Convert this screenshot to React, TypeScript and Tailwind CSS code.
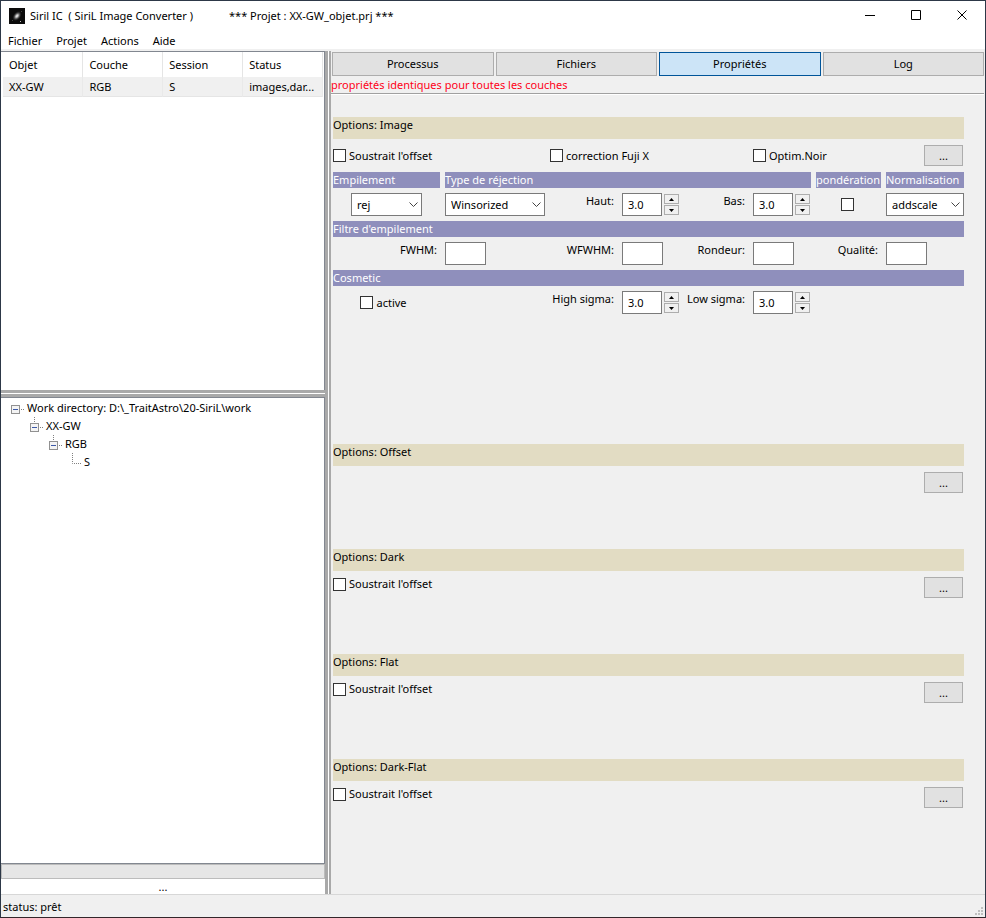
import { useId, useState, type ReactNode } from "react";

const MENUS = ["Fichier", "Projet", "Actions", "Aide"];
const TABS = ["Processus", "Fichiers", "Propriétés", "Log"];
const COLUMNS = ["Objet", "Couche", "Session", "Status"];
const ROWS = [["XX-GW", "RGB", "S", "images,dar..."]];

const GRID =
  "grid gap-[5px] grid-cols-[minmax(0,107fr)_minmax(0,100fr)_minmax(0,67fr)_minmax(0,58fr)_minmax(0,63fr)_minmax(0,58fr)_minmax(0,65fr)_minmax(0,78fr)]";

export default function App() {
  const [tab, setTab] = useState("Propriétés");

  return (
    <div className="flex min-h-screen flex-col border border-[#2d3847] border-b-[#33262a] bg-[#f0f0f0] font-['Noto_Sans','Open_Sans',sans-serif] text-[11px] leading-4 text-black">
      <TitleBar />
      <nav className="flex h-[18px] items-center bg-white pt-0.5">
        {MENUS.map((m) => (
          <button key={m} type="button" className="px-[7px]">
            {m}
          </button>
        ))}
      </nav>

      <div className="flex flex-1">
        <aside className="grid w-[324px] shrink-0 grid-rows-[339fr_7px_467fr_15px_15px] pt-0.5">
          <ObjectList />
          {/* Horizontal sash */}
          <div className="border-b-[3px] border-t-[3px] border-[#a9a9a9] bg-white" />
          <WorkTree />
          <div className="border border-[#bcbcbc] bg-[#e6e6e6]" />
          <p className="bg-white text-center">...</p>
        </aside>

        {/* Vertical sash */}
        <div className="mt-0.5 w-1.5 shrink-0 border-l-[3px] border-r-2 border-[#a9a9a9] bg-white" />

        <main className="min-w-0 flex-1">
          <div role="tablist" className="flex gap-0.5 px-px pt-[3px]">
            {TABS.map((t) => (
              <button
                key={t}
                type="button"
                role="tab"
                aria-selected={t === tab}
                onClick={() => setTab(t)}
                className={`h-6 flex-1 border ${
                  t === tab
                    ? "border-[#005499] bg-[#cce4f7]"
                    : "border-[#adadad] bg-[#e1e1e1]"
                }`}
              >
                {t}
              </button>
            ))}
          </div>
          <p className="h-[17px] pt-px text-[#ff0018]">
            propriétés identiques pour toutes les couches
          </p>
          <div className="mr-px h-0.5 border-b border-t border-b-white border-t-[#a0a0a0]" />

          <div className="pl-0.5 pr-[21px] pt-[22px]">
            <ImageSection />
            <OptionSection title="Options: Offset" />
            <OptionSection title="Options: Dark" offset />
            <OptionSection title="Options: Flat" offset />
            <OptionSection title="Options: Dark-Flat" offset />
          </div>
        </main>
      </div>

      <footer className="flex h-[23px] items-center justify-between border-t border-[#d7d7d7] pl-0.5 pr-0.5">
        <span className="pt-0.5">status: prêt</span>
        <svg width="8" height="8" className="mt-2.5 fill-[#bfbfbf]" aria-hidden="true">
          <path d="M6 0h2v2H6zM3 3h2v2H3zM6 3h2v2H6zM0 6h2v2H0zM3 6h2v2H3zM6 6h2v2H6z" />
        </svg>
      </footer>
    </div>
  );
}

function TitleBar() {
  return (
    <header className="flex h-[30px] items-center bg-white pl-2">
      <svg width="16" height="16" viewBox="0 0 16 16" aria-hidden="true">
        <defs>
          <radialGradient id="galaxy">
            <stop offset="0" stopColor="#fff" />
            <stop offset="0.3" stopColor="#aaa" />
            <stop offset="1" stopColor="#0b0b0b" stopOpacity="0" />
          </radialGradient>
        </defs>
        <rect width="16" height="16" fill="#0b0b0b" />
        <ellipse cx="8" cy="8" rx="6" ry="4" fill="url(#galaxy)" transform="rotate(-50 8 8)" />
        <path d="M3 12h1v1H3zM12 3h1v1h-1z" fill="#444" />
        <path d="M11 13h1v1h-1z" fill="#bbb" />
      </svg>
      <h1 className="ml-[5px] flex-1 whitespace-pre">
        {"Siril IC  ( SiriL Image Converter )"}
        <span className="ml-9">*** Projet : XX-GW_objet.prj ***</span>
      </h1>
      <WindowButton label="Réduire" d="M0 5.5h10" />
      <WindowButton label="Agrandir" d="M0.5 0.5h9v9h-9z" />
      <WindowButton label="Fermer" d="M0.5 0.5l9 9M9.5 0.5l-9 9" />
    </header>
  );
}

function WindowButton({ label, d }: { label: string; d: string }) {
  return (
    <button type="button" aria-label={label} className="flex h-full w-[46px] items-center justify-center pb-0.5">
      <svg width="10" height="10" className="fill-none stroke-black">
        <path d={d} />
      </svg>
    </button>
  );
}

function ObjectList() {
  return (
    <div className="border-r border-t border-[#828790] bg-white pl-0.5 pr-px">
      <table className="w-full table-fixed border-collapse text-left">
        <thead>
          <tr className="h-[25px]">
            {COLUMNS.map((c) => (
              <th key={c} className="border-r border-[#e5e5e5] pl-1.5 font-normal">
                {c}
              </th>
            ))}
          </tr>
        </thead>
        <tbody>
          {ROWS.map((row) => (
            <tr key={row[0]} className="h-[19px] border-b border-[#e5e5e5] bg-[#f0f0f0]">
              {row.map((v, i) => (
                <td key={i} className="whitespace-nowrap border-r border-[#e9e9e9] pl-1.5 pt-0.5">
                  {v}
                </td>
              ))}
            </tr>
          ))}
        </tbody>
      </table>
    </div>
  );
}

function WorkTree() {
  return (
    <div className="border border-l-0 border-[#828790] bg-white pl-2 pt-px">
      <ul>
        <TreeNode label={"Work directory: D:\\_TraitAstro\\20-SiriL\\work"} root>
          <TreeNode label="XX-GW">
            <TreeNode label="RGB">
              <TreeNode label="S" />
            </TreeNode>
          </TreeNode>
        </TreeNode>
      </ul>
    </div>
  );
}

function TreeNode({
  label,
  root,
  children,
}: {
  label: string;
  root?: boolean;
  children?: ReactNode;
}) {
  return (
    <li>
      <div className="flex h-[18px] items-center">
        <svg width="18" height="18" fill="none" aria-hidden="true">
          {children ? (
            <>
              {!root && <path d="M6.5 0v5" stroke="#808080" strokeDasharray="1 1" />}
              <rect x="2.5" y="6.5" width="8" height="8" fill="#f4f4f4" stroke="#919191" />
              <path d="M4 10.5h5" stroke="#3c59a8" />
              <path d="M12 10.5h3" stroke="#808080" strokeDasharray="1 1" />
            </>
          ) : (
            <path d="M6.5 0v10.5h9" stroke="#808080" strokeDasharray="1 1" />
          )}
        </svg>
        <span>{label}</span>
      </div>
      {children && <ul className="pl-[19px]">{children}</ul>}
    </li>
  );
}

function ImageSection() {
  return (
    <section className="pb-[130px]">
      <SectionTitle>Options: Image</SectionTitle>
      <div className={`${GRID} mt-[5px]`}>
        <div className="col-span-2 flex h-[23px] items-center">
          <Check label="Soustrait l'offset" />
        </div>
        <div className="col-span-3 flex items-center">
          <Check label="correction Fuji X" />
        </div>
        <div className="col-span-2 flex items-center">
          <Check label="Optim.Noir" />
        </div>
        <MoreButton />

        <Band>Empilement</Band>
        <Band className="col-span-5">Type de réjection</Band>
        <Band>pondération</Band>
        <Band>Normalisation</Band>

        <Combo label="Empilement" className="mx-[18px]" options={["rej", "sum", "med", "min", "max"]} />
        <Combo label="Type de réjection" options={["Winsorized", "Percentile", "Sigma", "Linear"]} />
        <Spin label="Haut:" />
        <Spin label="Bas:" />
        <div className="flex items-center justify-center pr-0.5">
          <Check hiddenLabel="pondération" />
        </div>
        <Combo label="Normalisation" options={["addscale", "add", "mulscale", "mul"]} />

        <Band className="col-span-8">Filtre d'empilement</Band>
        <Field label="FWHM:" />
        <Field label="WFWHM:" />
        <Field label="Rondeur:" />
        <Field label="Qualité:" />

        <Band className="col-span-8">Cosmetic</Band>
        <div className="flex h-[23px] items-center justify-center pr-1.5">
          <Check label="active" />
        </div>
        <Spin label="High sigma:" className="col-start-3" />
        <Spin label="Low sigma:" />
      </div>
    </section>
  );
}

function OptionSection({ title, offset }: { title: string; offset?: boolean }) {
  return (
    <section className="pb-[55px]">
      <SectionTitle>{title}</SectionTitle>
      <div className="mt-[5px] flex h-[23px] items-start justify-between">
        <div>{offset && <Check label="Soustrait l'offset" />}</div>
        <MoreButton />
      </div>
    </section>
  );
}

function SectionTitle({ children }: { children: ReactNode }) {
  return <h2 className="h-[22px] bg-[#e2dcc3]">{children}</h2>;
}

function Band({ className = "", children }: { className?: string; children: ReactNode }) {
  return (
    <h3 className={`h-4 whitespace-nowrap bg-[#8f8fbc] text-white ${className}`}>
      {children}
    </h3>
  );
}

function MoreButton() {
  return (
    <button
      type="button"
      className="mr-px mt-px h-[21px] w-[39px] justify-self-end border border-[#adadad] bg-[#e1e1e1]"
    >
      ...
    </button>
  );
}

function Check({ label, hiddenLabel }: { label?: string; hiddenLabel?: string }) {
  return (
    <label className="flex items-center gap-[3px] whitespace-nowrap">
      <input
        type="checkbox"
        aria-label={hiddenLabel}
        className="size-[13px] appearance-none border border-[#333] bg-white checked:bg-[#0078d7]"
      />
      {label}
    </label>
  );
}

function Combo({
  label,
  options,
  className = "",
}: {
  label: string;
  options: string[];
  className?: string;
}) {
  return (
    <div className={`relative h-[23px] ${className}`}>
      <select
        aria-label={label}
        className="size-full appearance-none border border-[#7a7a7a] bg-white pl-[5px]"
      >
        {options.map((o) => (
          <option key={o}>{o}</option>
        ))}
      </select>
      <svg
        width="9"
        height="6"
        className="pointer-events-none absolute right-1 top-[9px] fill-none stroke-[#444]"
        aria-hidden="true"
      >
        <path d="M0.5 0.5l4 4l4-4" />
      </svg>
    </div>
  );
}

function Field({ label }: { label: string }) {
  const id = useId();
  return (
    <>
      <label htmlFor={id} className="whitespace-nowrap pr-[3px] text-right">
        {label}
      </label>
      <input id={id} type="text" className="h-[23px] w-[41px] border border-[#7a7a7a] bg-white px-[5px]" />
    </>
  );
}

function Spin({ label, className = "" }: { label: string; className?: string }) {
  const id = useId();
  const [value, setValue] = useState("3.0");
  const step = (d: number) => setValue((v) => (Number(v) + d).toFixed(1));

  return (
    <>
      <label htmlFor={id} className={`flex justify-end whitespace-nowrap pr-[3px] ${className}`}>
        {label}
      </label>
      <div className="flex h-[23px] gap-0.5">
        <input
          id={id}
          type="text"
          value={value}
          onChange={(e) => setValue(e.target.value)}
          className="w-10 border border-[#7a7a7a] bg-white px-[5px]"
        />
        <div className="flex w-[15px] flex-col gap-px py-px">
          <SpinButton label="Augmenter" d="M0 3l2.5-3l2.5 3z" onClick={() => step(0.1)} />
          <SpinButton label="Diminuer" d="M0 0h5l-2.5 3z" onClick={() => step(-0.1)} />
        </div>
      </div>
    </>
  );
}

function SpinButton({ label, d, onClick }: { label: string; d: string; onClick: () => void }) {
  return (
    <button
      type="button"
      aria-label={label}
      onClick={onClick}
      className="flex flex-1 items-center justify-center border border-[#adadad] bg-[#f0f0f0]"
    >
      <svg width="5" height="3" className="fill-black">
        <path d={d} />
      </svg>
    </button>
  );
}
